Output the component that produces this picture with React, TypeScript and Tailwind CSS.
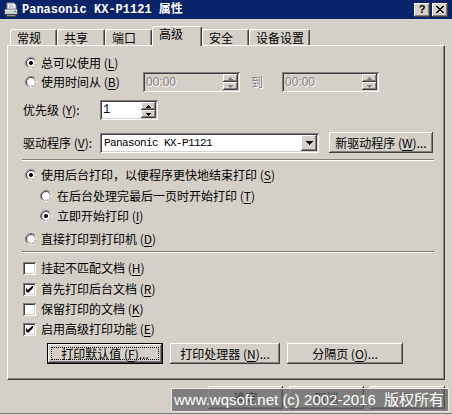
import React from "react";

const raised =
  "shadow-[inset_-1px_-1px_0_#404040,inset_1px_1px_0_#ffffff,inset_-2px_-2px_0_#808080,inset_2px_2px_0_#d4d0c8]";
const sunken =
  "shadow-[inset_1px_1px_0_#808080,inset_-1px_-1px_0_#ffffff,inset_2px_2px_0_#404040,inset_-2px_-2px_0_#d4d0c8]";

function Key({ k }: { k: string }) {
  return (
    <>
      (<u className="underline-offset-2">{k}</u>)
    </>
  );
}

function Radio({ checked }: { checked?: boolean }) {
  return (
    <svg width="12" height="12" viewBox="0 0 12 12" className="shrink-0">
      <circle cx="6" cy="6" r="5.5" fill="none" stroke="#808080" />
      <path d="M2.11 9.89A5.5 5.5 0 0 0 9.89 2.11" fill="none" stroke="#ffffff" />
      <circle cx="6" cy="6" r="4.5" fill="#ffffff" stroke="#404040" />
      <path d="M2.82 9.18A4.5 4.5 0 0 0 9.18 2.82" fill="none" stroke="#d4d0c8" />
      {checked && <circle cx="6" cy="6" r="2" fill="#000000" />}
    </svg>
  );
}

function Check({ checked }: { checked?: boolean }) {
  return (
    <div className={`w-[13px] h-[13px] bg-white shrink-0 flex items-center justify-center ${sunken}`}>
      {checked && (
        <svg width="7" height="7" viewBox="0 0 7 7">
          <path d="M0 2L2 4L7 -1L7 2L2 7L0 5Z" fill="#000000" />
        </svg>
      )}
    </div>
  );
}

function Arrow({ up, disabled }: { up?: boolean; disabled?: boolean }) {
  return (
    <svg width="5" height="3" viewBox="0 0 5 3" shapeRendering="crispEdges">
      <path
        d={up ? "M2 0h1v1H2zM1 1h3v1H1zM0 2h5v1H0z" : "M0 0h5v1H0zM1 1h3v1H1zM2 2h1v1H2z"}
        fill={disabled ? "#808080" : "#000000"}
      />
    </svg>
  );
}

function Spin({ disabled }: { disabled?: boolean }) {
  return (
    <div className="w-[15px] flex flex-col shrink-0">
      <div className={`flex-1 bg-[#d4d0c8] flex items-center justify-center ${raised}`}>
        <Arrow up disabled={disabled} />
      </div>
      <div className={`flex-1 bg-[#d4d0c8] flex items-center justify-center ${raised}`}>
        <Arrow disabled={disabled} />
      </div>
    </div>
  );
}

function TimeField() {
  return (
    <div className={`w-[97px] h-[20px] bg-[#d4d0c8] flex p-[2px] ${sunken}`}>
      <span className="flex-1 pl-[1px] font-['Liberation_Sans',sans-serif] text-[12px] leading-[16px] text-[#808080] [text-shadow:1px_1px_0_#ffffff]">
        00:00
      </span>
      <Spin disabled />
    </div>
  );
}

function Btn({ label, className, focused, disabled }: { label: React.ReactNode; className: string; focused?: boolean; disabled?: boolean }) {
  return (
    <div className={`${className} ${focused ? "border border-black" : ""} bg-[#d4d0c8] shrink-0`}>
      <div className={`relative w-full h-full flex items-center justify-center ${raised} ${disabled ? "text-[#808080] [text-shadow:1px_1px_0_#ffffff]" : ""}`}>
        {focused && <div className="absolute inset-[3px] border border-dotted border-black" />}
        <span>{label}</span>
      </div>
    </div>
  );
}

function Tab({ label, className, active }: { label: string; className: string; active?: boolean }) {
  return (
    <div
      className={`${className} ${
        active ? "h-[20px] mb-[-1px] relative z-10" : "h-[16px] pt-[1px]"
      } bg-[#d4d0c8] border-t border-l border-white border-r border-r-[#404040] rounded-tl-[3px] rounded-tr-[2px] shadow-[inset_-1px_0_0_#808080] pl-[6px] shrink-0`}
    >
      {label}
    </div>
  );
}

function PrinterIcon() {
  return (
    <svg width="16" height="16" viewBox="0 0 16 16" className="shrink-0">
      <path d="M4 1h7l2 2v4H4z" fill="#ffffff" stroke="#808080" />
      <path d="M6 3h4M6 5h5" stroke="#a0a0a0" />
      <path d="M1.5 7.5h13v5h-13z" fill="#c8ccd4" stroke="#404040" />
      <path d="M2 8h12" stroke="#ffffff" />
      <path d="M3.5 12.5h9v2h-9z" fill="#9098a8" stroke="#404040" />
      <rect x="11" y="9" width="2" height="1" fill="#20a020" />
    </svg>
  );
}

export default function App() {
  return (
    <div className="w-[452px] h-[415px] relative overflow-hidden bg-[#d4d0c8] text-black text-[12px] leading-[14px] font-['Noto_Sans_CJK_SC','Liberation_Sans',sans-serif] flex flex-col">
      <div className="h-[19px] bg-[#0a246a] flex items-center pl-[3px] pr-[4px] shrink-0">
        <PrinterIcon />
        <span className="ml-[3px] text-white font-bold font-['Liberation_Mono','Noto_Sans_CJK_SC',monospace] text-[12px] leading-[14px]">
          Panasonic KX-P1121 属性
        </span>
        <div className="ml-auto flex gap-[2px]">
          <div className={`w-[16px] h-[14px] bg-[#d4d0c8] flex items-center justify-center ${raised}`}>
            <span className="font-['Liberation_Sans',sans-serif] font-bold text-[11px] leading-[11px] mt-[-1px]">?</span>
          </div>
          <div className={`w-[16px] h-[14px] bg-[#d4d0c8] flex items-center justify-center ${raised}`}>
            <svg width="8" height="7" viewBox="0 0 8 7" shapeRendering="crispEdges">
              <path d="M0 0h2v1H0zM6 0h2v1H6zM1 1h2v1H1zM5 1h2v1H5zM2 2h4v1H2zM3 3h2v1H3zM2 4h4v1H2zM1 5h2v1H1zM5 5h2v1H5zM0 6h2v1H0zM6 6h2v1H6z" fill="#000000" />
            </svg>
          </div>
        </div>
      </div>

      <div className="flex items-end h-[19px] mt-[7px] pl-[10px] shrink-0">
        <Tab label="常规" className="w-[47px]" />
        <Tab label="共享" className="w-[48px]" />
        <Tab label="端口" className="w-[47px]" />
        <Tab label="高级" className="w-[50px]" active />
        <Tab label="安全" className="w-[47px]" />
        <Tab label="设备设置" className="w-[61px]" />
      </div>

      <div className="relative ml-[7px] w-[438px] h-[335px] shrink-0 border-t border-l border-white border-r border-b border-r-[#404040] border-b-[#404040] shadow-[inset_-1px_-1px_0_#808080] flex flex-col">
        <div className="mt-[9px] h-[16px] flex items-center pl-[17px]">
          <Radio checked />
          <span className="ml-[4px]">
            总可以使用 <Key k="L" />
          </span>
        </div>

        <div className="mt-[1px] h-[20px] flex items-center pl-[17px]">
          <Radio />
          <span className="ml-[4px] w-[102px]">
            使用时间从 <Key k="B" />
          </span>
          <TimeField />
          <span className="ml-[11px] w-[12px] text-[#808080] [text-shadow:1px_1px_0_#ffffff]">到</span>
          <div className="ml-[19px]">
            <TimeField />
          </div>
        </div>

        <div className="mt-[8px] h-[20px] flex items-center pl-[15px]">
          <span className="w-[77px]">
            优先级 <Key k="Y" />:
          </span>
          <div className={`w-[58px] h-[20px] bg-white flex p-[2px] ${sunken}`}>
            <span className="flex-1 pl-[1px] font-['Liberation_Mono',monospace] text-[12px] leading-[16px]">1</span>
            <Spin />
          </div>
        </div>

        <div className="mt-[12px] h-[21px] flex items-center pl-[15px]">
          <span className="w-[77px]">
            驱动程序 <Key k="V" />:
          </span>
          <div className={`w-[219px] h-[20px] bg-white flex p-[2px] ${sunken}`}>
            <span className="flex-1 pl-[2px] font-['Liberation_Mono',monospace] text-[11px] tracking-[-0.6px] leading-[16px]">
              Panasonic KX-P1121
            </span>
            <div className={`w-[16px] bg-[#d4d0c8] flex items-center justify-center ${raised}`}>
              <svg width="7" height="4" viewBox="0 0 7 4" shapeRendering="crispEdges">
                <path d="M0 0h7v1H0zM1 1h5v1H1zM2 2h3v1H2zM3 3h1v1H3z" fill="#000000" />
              </svg>
            </div>
          </div>
          <Btn
            className="ml-[10px] w-[104px] h-[21px]"
            label={
              <>
                新驱动程序 <Key k="W" />...
              </>
            }
          />
        </div>

        <div className="mt-[6px] ml-[14px] w-[412px] h-[2px] border-t border-[#808080] border-b border-b-white" />

        <div className="mt-[6px] h-[16px] flex items-center pl-[17px]">
          <Radio checked />
          <span className="ml-[4px]">
            使用后台打印，以便程序更快地结束打印 <Key k="S" />
          </span>
        </div>
        <div className="mt-[5px] h-[16px] flex items-center pl-[32px]">
          <Radio />
          <span className="ml-[5px]">
            在后台处理完最后一页时开始打印 <Key k="T" />
          </span>
        </div>
        <div className="mt-[4px] h-[16px] flex items-center pl-[32px]">
          <Radio checked />
          <span className="ml-[5px]">
            立即开始打印 <Key k="I" />
          </span>
        </div>
        <div className="mt-[7px] h-[16px] flex items-center pl-[17px]">
          <Radio />
          <span className="ml-[4px]">
            直接打印到打印机 <Key k="D" />
          </span>
        </div>

        <div className="mt-[4px] ml-[14px] w-[412px] h-[2px] border-t border-[#808080] border-b border-b-white" />

        <div className="mt-[7px] h-[16px] flex items-center pl-[15px]">
          <Check />
          <span className="ml-[5px]">
            挂起不匹配文档 <Key k="H" />
          </span>
        </div>
        <div className="mt-[5px] h-[16px] flex items-center pl-[15px]">
          <Check checked />
          <span className="ml-[5px]">
            首先打印后台文档 <Key k="R" />
          </span>
        </div>
        <div className="mt-[4px] h-[16px] flex items-center pl-[15px]">
          <Check />
          <span className="ml-[5px]">
            保留打印的文档 <Key k="K" />
          </span>
        </div>
        <div className="mt-[4px] h-[16px] flex items-center pl-[15px]">
          <Check checked />
          <span className="ml-[5px]">
            启用高级打印功能 <Key k="E" />
          </span>
        </div>

        <div className="mt-[6px] flex pl-[39px] gap-[7px]">
          <Btn
            focused
            className="w-[116px] h-[21px]"
            label={
              <>
                打印默认值 <Key k="F" />...
              </>
            }
          />
          <Btn
            className="w-[110px] h-[21px]"
            label={
              <>
                打印处理器 <Key k="N" />...
              </>
            }
          />
          <Btn
            className="w-[116px] h-[21px]"
            label={
              <>
                分隔页 <Key k="O" />...
              </>
            }
          />
        </div>
      </div>

      <div className="mt-[6px] flex pl-[208px] gap-[6px] shrink-0">
        <Btn className="w-[75px] h-[23px]" label="确定" />
        <Btn className="w-[75px] h-[23px]" label="取消" />
        <Btn
          disabled
          className="w-[75px] h-[23px]"
          label={
            <>
              应用 <Key k="A" />
            </>
          }
        />
      </div>

      <div className="mt-auto mb-[1px] h-px bg-[#808080] shrink-0" />

      <div className="absolute left-[171px] top-[388px] w-[278px] h-[24px] border border-[#e8e8e8] bg-[rgba(96,96,96,0.72)] flex items-center pl-[2px] text-white font-['Liberation_Sans','Noto_Sans_CJK_SC',sans-serif] text-[15px] leading-[18px] whitespace-pre">
        www.wqsoft.net (c) 2002-2016  版权所有
      </div>
    </div>
  );
}
